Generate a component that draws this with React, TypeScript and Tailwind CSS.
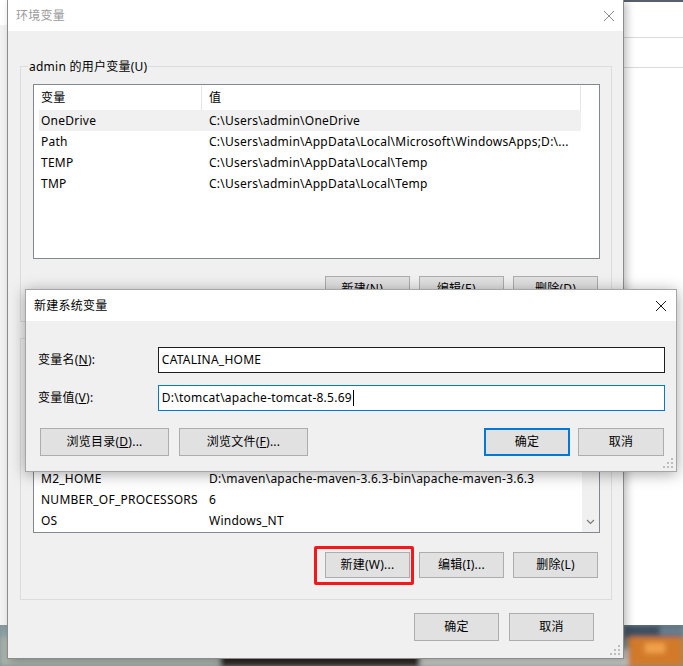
import type { ReactNode } from "react";

const userVars: [string, string][] = [
  ["OneDrive", "C:\\Users\\admin\\OneDrive"],
  ["Path", "C:\\Users\\admin\\AppData\\Local\\Microsoft\\WindowsApps;D:\\..."],
  ["TEMP", "C:\\Users\\admin\\AppData\\Local\\Temp"],
  ["TMP", "C:\\Users\\admin\\AppData\\Local\\Temp"],
];

// only the rows that show below the dialog; the list is scrolled to its end
const systemVars: [string, string][] = [
  ["M2_HOME", "D:\\maven\\apache-maven-3.6.3-bin\\apache-maven-3.6.3"],
  ["NUMBER_OF_PROCESSORS", "6"],
  ["OS", "Windows_NT"],
];

function CloseIcon({ color }: { color: string }) {
  return (
    <svg width="12" height="12" viewBox="0 0 12 12">
      <path d="M1 1 L11 11 M11 1 L1 11" stroke={color} strokeWidth="1" fill="none" />
    </svg>
  );
}

function Grip() {
  return (
    <svg width="10" height="10" viewBox="0 0 10 10" className="absolute bottom-[3px] right-[3px]">
      {[
        [8, 0],
        [8, 4],
        [4, 4],
        [8, 8],
        [4, 8],
        [0, 8],
      ].map(([x, y]) => (
        <rect key={`${x}-${y}`} x={x} y={y} width="2" height="2" fill="#bdbdbd" />
      ))}
    </svg>
  );
}

// mnemonic letter, underlined like a Win32 accelerator
function Key({ children }: { children: string }) {
  return <u className="inline-block">{children}</u>;
}

function Btn({ children, w = "w-[85px]", h = "h-[26px]", primary = false }: { children: ReactNode; w?: string; h?: string; primary?: boolean }) {
  return (
    <button
      type="button"
      className={`${w} ${h} flex items-center justify-center bg-[#e1e1e1] text-[12px] text-black ${
        primary ? "border-2 border-[#0078d7]" : "border border-[#adadad]"
      }`}
    >
      <span>{children}</span>
    </button>
  );
}

function Row({ name, value, selected }: { name: string; value: string; selected?: boolean }) {
  return (
    <div className={`ml-[5px] flex h-[21px] w-[542px] shrink-0 items-center whitespace-nowrap ${selected ? "bg-[#f0f0f0]" : ""}`}>
      <span className="w-[170px] pl-[2px]">{name}</span>
      <span className="overflow-hidden">{value}</span>
    </div>
  );
}

function Header() {
  return (
    <div className="flex h-[25px] shrink-0 items-center">
      <div className="flex h-[24px] w-[168px] items-center border-r border-[#e5e5e5] pl-[7px]">变量</div>
      <div className="flex h-[24px] w-[379px] items-center border-r border-[#e5e5e5] pl-[7px]">值</div>
    </div>
  );
}

function GroupBox({ label, children, height }: { label: string; children: ReactNode; height: string }) {
  return (
    <div className={`relative ml-[12px] w-[592px] ${height} border border-[#dcdcdc] pl-[12px] pr-[11px] pt-[17px]`}>
      <span className="absolute -top-[9px] left-[7px] bg-[#f0f0f0] px-[1px] leading-[17px]">{label}</span>
      {children}
    </div>
  );
}

export default function App() {
  return (
    <div className="relative h-[666px] w-[683px] overflow-hidden bg-white font-['Noto_Sans','Noto_Sans_CJK_SC',sans-serif] text-[12px] tracking-[0.25px] text-black">
      {/* desktop behind */}
      <div className="absolute left-0 top-[25px] h-[600px] w-[7px] bg-[#f2f2f2]" />
      <div className="absolute left-[624px] top-0 h-[2px] w-[59px] bg-[#56606c]" />
      <div className="absolute left-[624px] top-[37px] h-px w-[59px] bg-[#dadada]" />
      <div className="absolute left-[624px] top-[67px] h-px w-[59px] bg-[#dadada]" />
      <svg className="absolute left-0 top-[625px]" width="683" height="41" viewBox="0 0 683 41">
        <defs>
          <filter id="b">
            <feGaussianBlur stdDeviation="2.5" />
          </filter>
        </defs>
        <rect width="683" height="41" fill="#7f8f92" />
        <g filter="url(#b)">
          <rect x="0" y="0" width="30" height="41" fill="#8aa1a8" />
          <rect x="0" y="12" width="240" height="29" fill="#a8b3aa" />
          <rect x="220" y="20" width="230" height="21" fill="#2d2520" />
          <rect x="420" y="24" width="210" height="17" fill="#c9cbc6" />
          <rect x="624" y="0" width="59" height="14" fill="#3d4f60" />
          <rect x="628" y="12" width="55" height="29" fill="#d27a2c" />
          <rect x="645" y="18" width="20" height="10" fill="#f0a04a" />
          <rect x="660" y="2" width="23" height="8" fill="#6b7f90" />
        </g>
      </svg>

      {/* main window */}
      <div className="absolute left-[7px] top-0 flex h-[659px] w-[617px] flex-col border border-t-0 border-[#8c8c8c] bg-[#f0f0f0] shadow-[3px_2px_8px_rgba(0,0,0,0.25)]">
        <div className="flex h-[31px] shrink-0 items-center justify-between bg-white pl-[8px] pr-[8px]">
          <span className="text-[#9a9a9a]">环境变量</span>
          <CloseIcon color="#8a8a8a" />
        </div>

        <div className="mt-[35px] flex flex-col">
          <GroupBox label="admin 的用户变量(U)" height="h-[256px]">
            <div className="flex h-[175px] w-[567px] flex-col border border-[#828790] bg-white">
              <Header />
              {userVars.map(([n, v], i) => (
                <Row key={n} name={n} value={v} selected={i === 0} />
              ))}
            </div>
            <div className="mt-[17px] flex justify-end gap-[9px] pr-[2px]">
              <Btn>新建(N)...</Btn>
              <Btn>编辑(E)...</Btn>
              <Btn>删除(D)</Btn>
            </div>
          </GroupBox>

          <div className="h-[16px]" />

          <GroupBox label="系统变量(S)" height="h-[262px]">
            <div className="flex h-[177px] w-[567px] border border-[#828790] bg-white">
              <div className="flex flex-1 flex-col justify-end overflow-hidden pb-[1px]">
                {systemVars.map(([n, v]) => (
                  <Row key={n} name={n} value={v} />
                ))}
              </div>
              <div className="flex w-[17px] flex-col justify-end bg-[#f0f0f0] pb-[6px]">
                <svg width="17" height="8" viewBox="0 0 17 8">
                  <path d="M5 2 L8.5 5.5 L12 2" stroke="#7a7a7a" strokeWidth="1.2" fill="none" />
                </svg>
              </div>
            </div>
            <div className="relative mt-[19px] flex justify-end gap-[9px] pr-[2px]">
              <Btn>新建(W)...</Btn>
              <Btn>编辑(I)...</Btn>
              <Btn>删除(L)</Btn>
              <div className="pointer-events-none absolute left-[281px] -top-[6px] h-[39px] w-[100px] rounded-[2px] border-[3px] border-[#f5171a]" />
            </div>
          </GroupBox>

          <div className="mt-[13px] flex justify-end gap-[10px] pr-[29px]">
            <Btn h="h-[28px]">确定</Btn>
            <Btn h="h-[28px]">取消</Btn>
          </div>
        </div>
        <Grip />
      </div>

      {/* new system variable dialog */}
      <div className="absolute left-[25px] top-[289px] flex h-[183px] w-[652px] flex-col border border-[#a6a6a6] bg-[#f0f0f0] shadow-[0_2px_14px_rgba(0,0,0,0.35)]">
        <div className="flex h-[31px] shrink-0 items-center justify-between bg-white pl-[8px] pr-[9px]">
          <span>新建系统变量</span>
          <CloseIcon color="#1a1a1a" />
        </div>
        <div className="flex flex-col pl-[12px] pr-[11px] pt-[26px]">
          <div className="flex items-center">
            <span className="w-[120px]">
              变量名(<Key>N</Key>):
            </span>
            <div className="flex h-[26px] w-[508px] items-center border border-[#1e1e1e] bg-white pl-[3px]">CATALINA_HOME</div>
          </div>
          <div className="mt-[12px] flex items-center">
            <span className="w-[120px]">
              变量值(<Key>V</Key>):
            </span>
            <div className="flex h-[26px] w-[508px] items-center border border-[#0078d7] bg-white pl-[3px]">
              <span>D:\tomcat\apache-tomcat-8.5.69</span>
              <span className="ml-px inline-block h-[16px] w-px bg-black" />
            </div>
          </div>
          <div className="mt-[17px] flex items-center">
            <div className="ml-[2px] flex gap-[10px]">
              <Btn w="w-[129px]" h="h-[28px]">
                浏览目录(<Key>D</Key>)...
              </Btn>
              <Btn w="w-[129px]" h="h-[28px]">
                浏览文件(<Key>F</Key>)...
              </Btn>
            </div>
            <div className="ml-auto mr-[1px] flex gap-[8px]">
              <Btn w="w-[86px]" h="h-[28px]" primary>
                确定
              </Btn>
              <Btn w="w-[86px]" h="h-[28px]">
                取消
              </Btn>
            </div>
          </div>
        </div>
        <Grip />
      </div>
    </div>
  );
}
